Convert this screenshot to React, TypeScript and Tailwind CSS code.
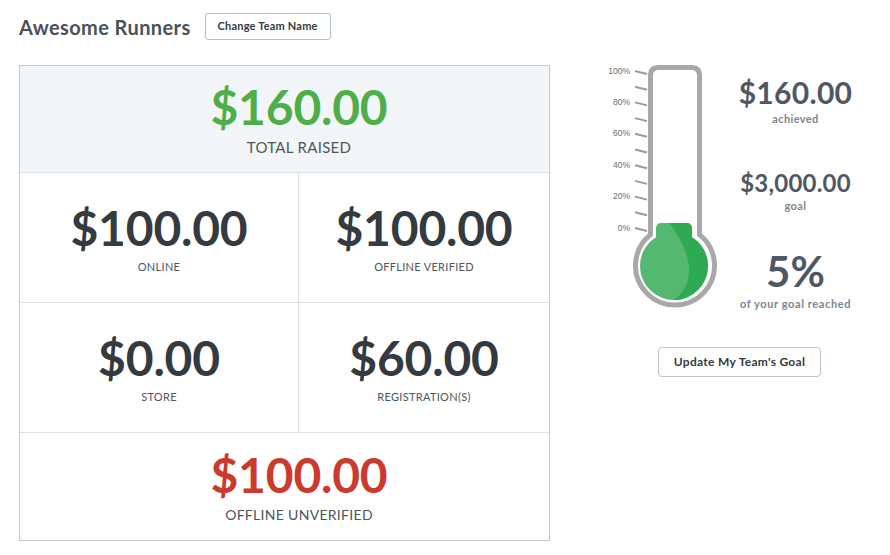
import React from "react";

const font = { fontFamily: "Lato, 'Open Sans', Arial, sans-serif" };

function Thermo() {
  const ticks = Array.from({ length: 11 }, (_, i) => 71 + i * 15.7);
  const labels = ["100%", "80%", "60%", "40%", "20%", "0%"];
  return (
    <svg width="122" height="255" viewBox="598 60 122 255" className="shrink-0">
      <defs>
        <clipPath id="greenClip">
          <rect x="656" y="223" width="36" height="40" rx="5" />
          <circle cx="674" cy="266" r="34" />
        </clipPath>
      </defs>
      {ticks.map((y, i) => (
        <line key={i} x1="635" y1={y} x2="647" y2={y + 3} stroke="#9b9b9b" strokeWidth="2" />
      ))}
      {labels.map((l, i) => (
        <text
          key={l}
          x="630"
          y={ticks[i * 2] + 2.5}
          textAnchor="end"
          fontSize="8.5"
          fill="#6b6b6b"
          style={{ fontFamily: "Arial, 'Liberation Sans', sans-serif" }}
        >
          {l}
        </text>
      ))}
      <path
        d="M650.5,234.6 L650.5,75.5 Q650.5,67.5 658.5,67.5 L691.5,67.5 Q699.5,67.5 699.5,75.5 L699.5,234.6 A39.5,39.5 0 1 1 650.5,234.6 Z"
        fill="#ffffff"
        stroke="#a8a8a8"
        strokeWidth="5"
      />
      <g clipPath="url(#greenClip)">
        <rect x="630" y="215" width="90" height="95" fill="#55b870" />
        <path
          d="M667,220 C676,232 690,252 689,272 C688,288 680,297 668,304 L720,304 L720,220 Z"
          fill="#2eaa52"
        />
      </g>
    </svg>
  );
}

function Cell({
  amount,
  label,
  color,
  labelSize,
  className,
}: {
  amount: string;
  label: string;
  color: string;
  labelSize: string;
  className?: string;
}) {
  return (
    <div className={`flex flex-col items-center justify-center ${className ?? ""}`}>
      <div className={`text-[48px] font-bold leading-none tracking-[-0.2px] ${color}`}>{amount}</div>
      <div className={`${labelSize} leading-none tracking-[0.3px] text-[#4d555d] mt-[9px]`}>{label}</div>
    </div>
  );
}

export default function App() {
  return (
    <div style={font} className="w-[890px] h-[555px] bg-white pl-[19px] pt-[13px]">
      <div className="flex items-center">
        <h1 className="text-[20px] font-bold leading-none tracking-[0.4px] text-[#4a5158]">Awesome Runners</h1>
        <button className="ml-[14px] h-[27px] w-[126px] rounded-[3px] border border-[#b3c2cf] bg-white text-[11px] font-bold tracking-[0.2px] text-[#333a40]">
          Change Team Name
        </button>
      </div>
      <div className="flex items-start mt-[25px]">
        <div className="w-[531px] border border-[#c2c8cd] flex flex-col">
          <Cell
            amount="$160.00"
            label="TOTAL RAISED"
            color="text-[#4fae49]"
            labelSize="text-[15px]"
            className="h-[107px] pl-[29px] bg-[#f3f6f8] border-b border-[#dde2e5]"
          />
          <div className="grid grid-cols-[279px_1fr] h-[130px] border-b border-[#dde2e5]">
            <Cell amount="$100.00" label="ONLINE" color="text-[#343a40]" labelSize="text-[11px]" className="border-r border-[#dde2e5]" />
            <Cell amount="$100.00" label="OFFLINE VERIFIED" color="text-[#343a40]" labelSize="text-[11px]" />
          </div>
          <div className="grid grid-cols-[279px_1fr] h-[130px] border-b border-[#dde2e5]">
            <Cell amount="$0.00" label="STORE" color="text-[#343a40]" labelSize="text-[11px]" className="border-r border-[#dde2e5]" />
            <Cell amount="$60.00" label="REGISTRATION(S)" color="text-[#343a40]" labelSize="text-[11px]" />
          </div>
          <Cell
            amount="$100.00"
            label="OFFLINE UNVERIFIED"
            color="text-[#cb3a2c]"
            labelSize="text-[14px]"
            className="h-[107px] pl-[29px]"
          />
        </div>
        <div className="ml-[48px] -mt-[5px] flex flex-col">
          <div className="flex">
            <Thermo />
            <div className="w-[151px] flex flex-col items-center pt-[17px] leading-none text-[#4f5862]">
              <div className="text-[30px] font-bold leading-none tracking-[0.3px]">$160.00</div>
              <div className="mt-[6px] text-[11px] font-bold leading-none tracking-[0.4px] text-[#7b8691]">achieved</div>
              <div className="mt-[47px] text-[24px] font-bold leading-none tracking-[0.2px]">$3,000.00</div>
              <div className="mt-[5px] text-[11px] font-bold leading-none tracking-[0.4px] text-[#7b8691]">goal</div>
              <div className="mt-[39px] text-[42px] font-bold leading-none">5%</div>
              <div className="mt-[6px] text-[11px] font-bold leading-none tracking-[0.6px] text-[#7b8691]">of your goal reached</div>
            </div>
          </div>
          <button className="ml-[60px] mt-[32px] self-start h-[30px] w-[163px] rounded-[4px] border border-[#b8c4cf] bg-white text-[12px] font-bold tracking-[0.3px] text-[#333a40]">
            Update My Team's Goal
          </button>
        </div>
      </div>
    </div>
  );
}
